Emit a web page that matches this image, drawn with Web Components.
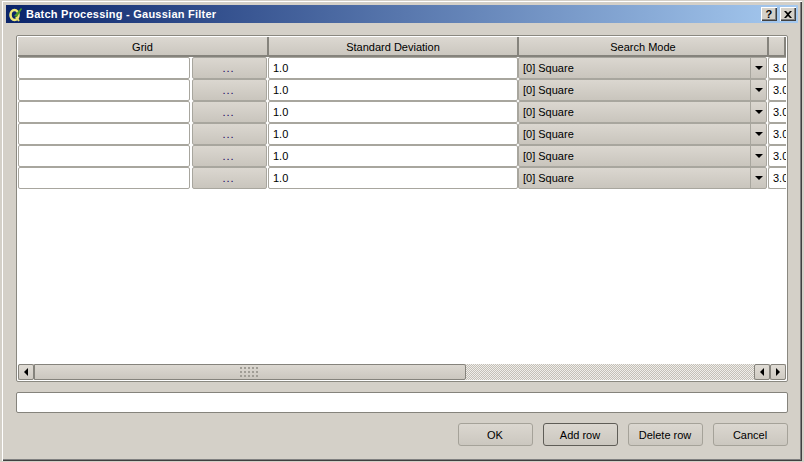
<!DOCTYPE html>
<html><head><meta charset="utf-8"><style>
html,body{margin:0;padding:0;background:#d4d0c8;overflow:hidden}
body{font:11px "Liberation Sans",Arial,sans-serif;color:#000}
</style></head><body>
<qt-dialog>
  <qt-titlebar slot="title">Batch Processing - Gaussian Filter</qt-titlebar>
  <qt-table>
    <qt-row head><qt-head>Grid</qt-head><qt-head>Standard Deviation</qt-head><qt-head>Search Mode</qt-head><qt-head></qt-head></qt-row>
    <qt-row></qt-row><qt-row></qt-row><qt-row></qt-row><qt-row></qt-row><qt-row></qt-row><qt-row></qt-row>
  </qt-table>
  <qt-edit></qt-edit>
  <qt-buttons>
    <qt-button>OK</qt-button><qt-button focus>Add row</qt-button><qt-button>Delete row</qt-button><qt-button>Cancel</qt-button>
  </qt-buttons>
</qt-dialog>
<script>
const def=(name,html,init)=>customElements.define(name,class extends HTMLElement{
  constructor(){super();this.attachShadow({mode:'open'}).innerHTML=html;}
  connectedCallback(){init&&init(this)}
});
def('qt-dialog',`<style>
:host{display:flex;flex-direction:column;box-sizing:border-box;width:804px;height:462px;background:#d4d0c8;
border-left:2px solid #d4d0c8;border-right:2px solid #d4d0c8;border-top:1px solid #d4d0c8;border-bottom:1px solid #d4d0c8;
box-shadow:inset 1px 1px 0 #fff,inset -1px -1px 0 #404040,inset -2px -2px 0 #808080;padding:4px 4px 3px 4px}
.c{flex:1;display:flex;flex-direction:column;padding:12px 10px 0 10px;min-height:0}
</style><slot name="title"></slot><div class="c"><slot></slot></div>`);
def('qt-titlebar',`<style>
:host{display:flex;align-items:center;height:18px;flex:none;color:#fff;font-weight:bold;font-size:11px;letter-spacing:.24px;
background:linear-gradient(90deg,#0a246a,#a6caf0);gap:3px;padding-left:2px;white-space:nowrap}
.t{flex:1;margin-left:-1px}
.b{box-sizing:border-box;width:16px;height:14px;background:#d4d0c8;color:#000;
box-shadow:inset 1px 1px 0 #fff,inset -1px -1px 0 #404040,inset -2px -2px 0 #808080;display:flex;align-items:center;justify-content:center;font-size:11px;line-height:14px}
.x{margin-right:2px}
svg{display:block}
</style>
<svg width="16" height="16" viewBox="0 0 16 16"><ellipse cx="6.500" cy="9" rx="4" ry="5" fill="none" stroke="#f0e878" stroke-width="2.600"/><path d="M8 11l3 4" stroke="#e8e070" stroke-width="2"/><path d="M6 10L13 2l1 1-5 8z" fill="#4f9a2a"/></svg>
<span class="t"><slot></slot></span>
<span class="b">?</span><span class="b x"><svg width="8" height="7" viewBox="0 0 8 7"><path d="M0 0h2l2 2 2-2h2L5 3.500 8 7H6L4 5 2 7H0l3-3.500z"/></svg></span>`);
def('qt-table',`<style>
:host{display:flex;flex-direction:column;box-sizing:border-box;height:347px;border:1px solid #8a8880;border-radius:2px;flex:none;background:#fff;padding:1px;overflow:hidden}
.s{flex:1}
</style><slot></slot><div class="s"></div><qt-scroll></qt-scroll>`);
def('qt-row',`<style>
:host{display:grid;grid-template-columns:250px 250px 250px 18px;height:22px;flex:none;overflow:hidden}
:host([head]){height:20px;grid-template-columns:251px 250px 250px 17px}
.cell{box-sizing:border-box;display:flex;height:22px;background:#fff;gap:2px}
.in{flex:1;min-width:0;background:#fff;box-sizing:border-box;border:1px solid #a8a69e;border-radius:2px;padding:0 4px;line-height:20px;height:22px;overflow:hidden;white-space:nowrap}
.w{flex:none;width:172px}
.btn{width:75px;flex:none;height:22px;background:linear-gradient(#dbd7d0,#c9c5bd);border-radius:2px;box-sizing:border-box;border:1px solid #a8a69e;text-align:center;line-height:21px;padding-right:2px;color:#100060;letter-spacing:1px}
.combo{flex:none;width:249px;height:22px;box-sizing:border-box;background:linear-gradient(#dbd7d0,#c9c5bd);display:flex;border:1px solid #a8a69e;border-radius:2px;line-height:20px;padding-left:4px}
.combo span{flex:1}
.combo i{width:15px;border-left:1px solid #a8a69e;display:flex;align-items:center;justify-content:center}
.combo i::after{content:"";border:4px solid transparent;border-top:4px solid #000;border-bottom:0}
</style><slot></slot>`,el=>{
  if(el.hasAttribute('head'))return;
  el.shadowRoot.innerHTML+=`<div class="cell"><div class="in w"></div><div class="btn">...</div></div>
  <div class="cell"><div class="in">1.0</div></div>
  <div class="cell"><div class="combo"><span>[0] Square</span><i></i></div></div>
  <div class="cell"><div class="in" style="flex:none;width:40px;border-right:0">3.0</div></div>`;
});
def('qt-head',`<style>
:host{display:block;box-sizing:border-box;height:20px;text-align:center;line-height:21px;background:linear-gradient(#dcd8d1,#cbc7bf);
border-right:2px solid #85837c;border-bottom:2px solid #85837c;overflow:hidden}
</style><slot></slot>`);
def('qt-scroll',`<style>
:host{display:flex;height:16px;flex:none;background:repeating-conic-gradient(#c4c0b8 0 25%,#f0eeea 0 50%) 0 0/2px 2px}
.b{box-sizing:border-box;width:16px;height:16px;flex:none;border:1px solid #85837c;border-radius:2px;background:linear-gradient(#e0dcd5,#cfcbc3);display:flex;align-items:center;justify-content:center}
.l::after{content:"";border:4px solid transparent;border-right:4px solid #000;border-left:0}
.r::after{content:"";border:4px solid transparent;border-left:4px solid #000;border-right:0}
.th{box-sizing:border-box;width:432px;flex:none;height:16px;border:1px solid #85837c;border-radius:0 2px 2px 0;background:linear-gradient(#dcd8d1,#cbc7bf);display:flex;align-items:center;justify-content:center}
.g{width:19px;height:11px;background:radial-gradient(circle at 1px 1px,#a09d95 0.8px,transparent 1px) 0 0/4px 4px;margin-left:-2px}
.sp{flex:1}
</style><div class="b l"></div><div class="th"><div class="g"></div></div><div class="sp"></div><div class="b l"></div><div class="b r"></div>`);
def('qt-edit',`<style>
:host{display:block;box-sizing:border-box;height:21px;margin-top:10px;background:#fff;border:1px solid #85837c;border-radius:2px;flex:none}
</style>`);
def('qt-buttons',`<style>
:host{display:flex;justify-content:flex-end;gap:10px;margin-top:10px;flex:none}
</style><slot></slot>`);
def('qt-button',`<style>
:host{display:block;box-sizing:border-box;width:75px;height:23px;border:1px solid #a5a299;border-radius:3px;background:linear-gradient(#dbd7d0,#cbc7bf);text-align:center;line-height:23px;padding-right:1px}
:host([focus]){border-color:#5f5d57}
</style><slot></slot>`);
</script>
</body></html>
